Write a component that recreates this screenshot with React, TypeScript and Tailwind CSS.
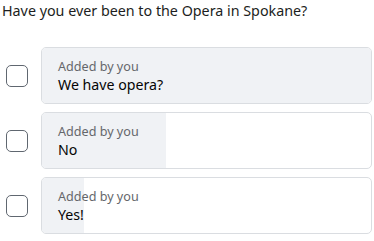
const OPTIONS = [
  { id: 1, text: "We have opera?", pct: 100 },
  { id: 2, text: "No", pct: 37.8 },
  { id: 3, text: "Yes!", pct: 12.7 },
];

function Checkbox() {
  return (
    <div className="h-[22px] w-[22px] shrink-0 rounded-[5px] border-[1.5px] border-[#606770] bg-white" />
  );
}

function OptionRow({ text, pct }: { text: string; pct: number }) {
  return (
    <div className="flex items-center">
      <div className="flex w-[41px] shrink-0 pl-[6px]">
        <Checkbox />
      </div>
      <div className="relative h-[57px] flex-1 overflow-hidden rounded-[5px] border border-[#dadde1] bg-white">
        <div className="absolute inset-y-0 left-0 bg-[#f0f2f5]" style={{ width: `${pct}%` }} />
        <div className="relative flex h-full flex-col justify-center pl-[16px] pt-[2px]">
          <span className="text-[12.6px] leading-[17px] text-[#65676b]">Added by you</span>
          <span className="text-[14.2px] leading-[20px] text-[#050505]">{text}</span>
        </div>
      </div>
    </div>
  );
}

export default function App() {
  return (
    <div className="min-h-screen w-[374px] bg-white pr-[2px] font-['Noto_Sans',sans-serif]">
      <p className="pl-[2px] pt-[1px] text-[14.3px] leading-[20px] text-[#1c1e21]">
        Have you ever been to the Opera in Spokane?
      </p>
      <div className="mt-[26px] flex flex-col gap-[8px]">
        {OPTIONS.map((o) => (
          <OptionRow key={o.id} text={o.text} pct={o.pct} />
        ))}
      </div>
    </div>
  );
}
